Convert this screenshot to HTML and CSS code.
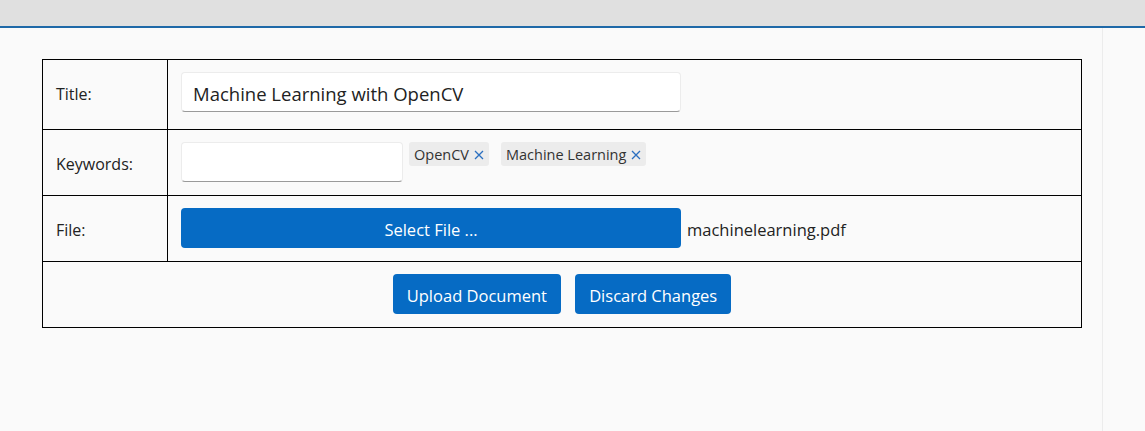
FILE: index.html
```html
<!DOCTYPE html>
<html>
<head>
<meta charset="utf-8">
<link rel="stylesheet" href="styles.css">
</head>
<body>
<div class="topbar"></div>
<div class="layout">
  <main class="main">
    <table class="form-table">
      <tr class="row-title">
        <td class="label">Title:</td>
        <td class="value"><input class="text-input title-input" type="text" value="Machine Learning with OpenCV"></td>
      </tr>
      <tr>
        <td class="label">Keywords:</td>
        <td class="value">
          <div class="keywords">
            <input class="text-input kw-input" type="text">
            <span class="tag">OpenCV<svg class="tag-x" viewBox="0 0 10 10" width="10" height="10"><path d="M1 1L9 9M9 1L1 9"/></svg></span>
            <span class="tag">Machine Learning<svg class="tag-x" viewBox="0 0 10 10" width="10" height="10"><path d="M1 1L9 9M9 1L1 9"/></svg></span>
          </div>
        </td>
      </tr>
      <tr>
        <td class="label">File:</td>
        <td class="value">
          <div class="file-row">
            <button class="btn select-btn">Select File ...</button>
            <span class="file-name">machinelearning.pdf</span>
          </div>
        </td>
      </tr>
      <tr>
        <td class="actions" colspan="2">
          <button class="btn action-btn">Upload Document</button>
          <button class="btn action-btn">Discard Changes</button>
        </td>
      </tr>
    </table>
  </main>
  <aside class="side"></aside>
</div>
</body>
</html>
```
FILE: styles.css
```css
html, body {
  margin: 0;
  padding: 0;
  background: #fafafa;
  font-family: "Open Sans", "Noto Sans", sans-serif;
  color: #222;
}
.topbar {
  height: 26px;
  background: #e0e0e0;
  border-bottom: 2px solid #1f69a8;
}
.layout {
  display: flex;
  height: 403px;
}
.main {
  width: 1102px;
  padding: 31px 0 0 42px;
  box-sizing: border-box;
}
.side {
  flex: 1;
  border-left: 1px solid #ececec;
}
.form-table {
  border-collapse: collapse;
  width: 1040px;
}
.form-table td {
  border: 1px solid #000;
  padding: 12px 13px 13px 13px;
  font-size: 16px;
}
.form-table td.label {
  width: 98px;
  vertical-align: middle;
  padding-top: 16px;
}
.row-title td {
  padding-bottom: 17px;
}
.text-input {
  display: block;
  box-sizing: border-box;
  height: 40px;
  border: 1px solid #ececec;
  border-bottom-color: #9a9a9a;
  border-radius: 4px;
  background: #fff;
  font-family: inherit;
  font-size: 18.5px;
  padding: 2px 11px 0;
  color: #222;
  outline: none;
}
.title-input { width: 500px; }
.kw-input { width: 222px; }
.keywords {
  display: flex;
  align-items: flex-start;
}
.tag {
  display: inline-flex;
  align-items: center;
  margin-left: 6px;
  margin-right: 6px;
  height: 24px;
  padding: 1px 5px 0;
  box-sizing: border-box;
  background: #ececec;
  border-radius: 3px;
  font-size: 14.5px;
  color: #333;
  white-space: nowrap;
}
.tag-x {
  margin-left: 5px;
  stroke: #2a6fc0;
  stroke-width: 1.3;
  fill: none;
}
.file-row {
  display: flex;
  align-items: center;
}
.btn {
  background: #066bc4;
  color: #fff;
  border: none;
  border-radius: 4px;
  height: 40px;
  font-family: inherit;
  font-size: 16.5px;
  padding: 3px 14px 0;
}
.select-btn { width: 500px; }
.file-name {
  margin-left: 6px;
  padding-top: 3px;
  font-size: 16.5px;
}
.form-table td.actions {
  text-align: center;
}
.action-btn {
  margin: 0 5px;
}
```
